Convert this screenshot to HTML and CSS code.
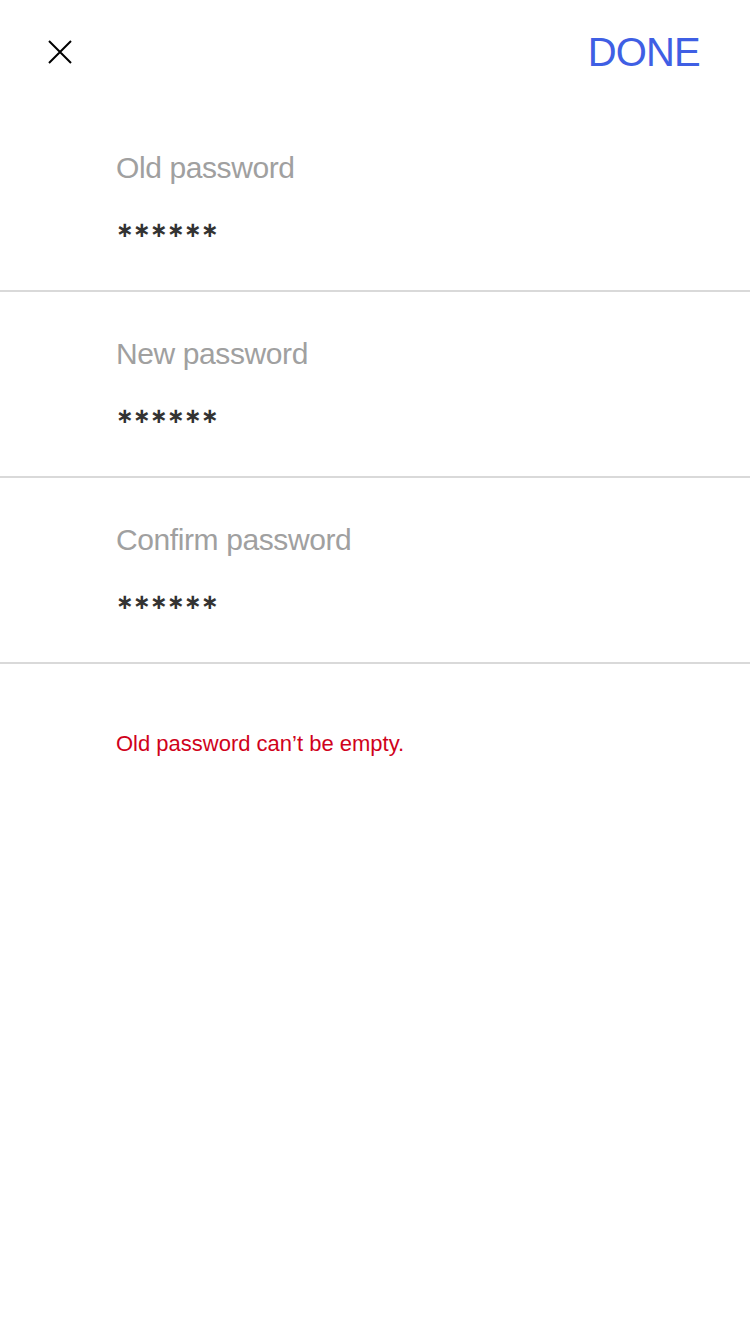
FILE: index.html
```html
<!DOCTYPE html>
<html lang="en">
<head>
<meta charset="utf-8">
<title>Change password</title>
<link rel="stylesheet" href="styles.css">
</head>
<body>
<div class="screen">
  <header class="topbar">
    <button class="close" aria-label="Close">
      <svg width="24" height="24" viewBox="0 0 24 24"><path d="M1 1 L23 23 M23 1 L1 23" stroke="#000" stroke-width="2" fill="none"/></svg>
    </button>
    <button class="done">DONE</button>
  </header>
  <main class="fields">
    <div class="field">
      <div class="label">Old password</div>
      <div class="value">∗∗∗∗∗∗</div>
    </div>
    <div class="field">
      <div class="label">New password</div>
      <div class="value">∗∗∗∗∗∗</div>
    </div>
    <div class="field">
      <div class="label">Confirm password</div>
      <div class="value">∗∗∗∗∗∗</div>
    </div>
    <p class="error">Old password can’t be empty.</p>
  </main>
</div>
</body>
</html>
```
FILE: styles.css
```css
html, body {
  margin: 0;
  padding: 0;
  background: #fff;
}
body {
  font-family: "Liberation Sans", Arial, sans-serif;
}
.screen {
  width: 750px;
  min-height: 1334px;
}
.topbar {
  height: 104px;
  display: flex;
  align-items: center;
  justify-content: space-between;
  padding: 0 50px 0 48px;
}
.close {
  border: 0;
  background: none;
  padding: 0;
  width: 24px;
  height: 24px;
  display: block;
}
.close svg { display: block; }
.done {
  border: 0;
  background: none;
  padding: 0;
  font-family: "Liberation Sans", Arial, sans-serif;
  font-size: 40px;
  line-height: 48px;
  letter-spacing: -0.8px;
  color: #3f5fe4;
}
.fields {
  padding-top: 2px;
}
.field {
  height: 184px;
  box-sizing: content-box;
  border-bottom: 2px solid #d9d9d9;
  padding-left: 116px;
  display: flex;
  flex-direction: column;
}
.label {
  margin-top: 44px;
  font-size: 30px;
  line-height: 36px;
  color: #a0a0a0;
  letter-spacing: -0.4px;
}
.value {
  margin-top: 26px;
  font-family: "DejaVu Sans", sans-serif;
  font-size: 21px;
  font-weight: bold;
  line-height: 36px;
  color: #333;
  letter-spacing: -0.6px;
}
.error {
  margin: 67px 0 0 116px;
  font-size: 22px;
  line-height: 26px;
  color: #d0021b;
}
```
